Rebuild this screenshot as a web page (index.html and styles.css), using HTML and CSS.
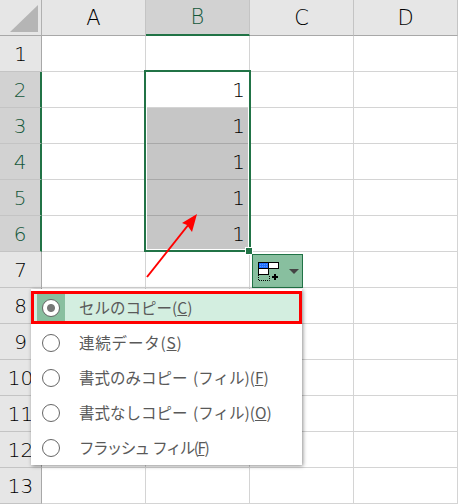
FILE: index.html
```html
<!DOCTYPE html>
<html lang="ja">
<head>
    <meta charset="UTF-8">
    <title>セルのコピー</title>
    <link rel="stylesheet" href="styles.css">
</head>
<body>
    <div class="sheet">
        <!-- Column headers -->
        <div class="grid">
            <div class="corner"><div class="corner-mark"></div></div>
            <div class="col-head">A</div>
            <div class="col-head col-on">B</div>
            <div class="col-head">C</div>
            <div class="col-head">D</div>

            <div class="row-head">1</div><div class="cell"></div><div class="cell"></div><div class="cell"></div><div class="cell"></div>
            <div class="row-head row-on">2</div><div class="cell"></div><div class="cell num">1</div><div class="cell"></div><div class="cell"></div>
            <div class="row-head row-on">3</div><div class="cell"></div><div class="cell num shade">1</div><div class="cell"></div><div class="cell"></div>
            <div class="row-head row-on">4</div><div class="cell"></div><div class="cell num shade">1</div><div class="cell"></div><div class="cell"></div>
            <div class="row-head row-on">5</div><div class="cell"></div><div class="cell num shade">1</div><div class="cell"></div><div class="cell"></div>
            <div class="row-head row-on">6</div><div class="cell"></div><div class="cell num shade">1</div><div class="cell"></div><div class="cell"></div>
            <div class="row-head">7</div><div class="cell"></div><div class="cell"></div><div class="cell"></div><div class="cell"></div>
            <div class="row-head">8</div><div class="cell"></div><div class="cell"></div><div class="cell"></div><div class="cell"></div>
            <div class="row-head">9</div><div class="cell"></div><div class="cell"></div><div class="cell"></div><div class="cell"></div>
            <div class="row-head">10</div><div class="cell"></div><div class="cell"></div><div class="cell"></div><div class="cell"></div>
            <div class="row-head">11</div><div class="cell"></div><div class="cell"></div><div class="cell"></div><div class="cell"></div>
            <div class="row-head">12</div><div class="cell"></div><div class="cell"></div><div class="cell"></div><div class="cell"></div>
            <div class="row-head">13</div><div class="cell"></div><div class="cell"></div><div class="cell"></div><div class="cell"></div>
        </div>

        <!-- Selection box and fill handle -->
        <div class="selection"></div>
        <div class="handle"></div>

        <!-- Autofill options button -->
        <div class="fill-btn">
            <svg width="22" height="19" viewBox="0 0 22 19">
                <defs>
                    <pattern id="dots" width="2" height="2" patternUnits="userSpaceOnUse">
                        <rect width="2" height="2" fill="#1f6fff"/>
                        <rect width="1" height="1" fill="#5a9bff"/>
                    </pattern>
                </defs>
                <rect x="0.5" y="0.5" width="10" height="6" fill="url(#dots)" stroke="#000"/>
                <rect x="10.5" y="0.5" width="10" height="6" fill="#fff" stroke="#000"/>
                <rect x="0.5" y="6.5" width="10" height="6" fill="#fff" stroke="#000"/>
                <path d="M0.5 13v5.5h11V13" fill="none" stroke="#000" stroke-dasharray="1 1"/>
                <path d="M16 12h2v2h2v2h-2v2h-2v-2h-2v-2h2z" fill="#000"/>
            </svg>
            <div class="caret"></div>
        </div>

        <!-- Arrow annotation -->
        <svg class="arrow" width="70" height="70" viewBox="0 0 70 70">
            <path d="M2 63L44 10" stroke="#f00" stroke-width="2" fill="none"/>
            <path d="M52 0L37 9L42 11L47 18z" fill="#f00"/>
        </svg>

        <!-- Fill options menu -->
        <div class="menu">
            <div class="item item-on">
                <span class="icon-box"><span class="radio radio-on"></span></span>
                <span class="label">セルのコピー(<u>C</u>)</span>
            </div>
            <div class="item">
                <span class="icon-box"><span class="radio"></span></span>
                <span class="label label-wide">連続データ(<u>S</u>)</span>
            </div>
            <div class="item">
                <span class="icon-box"><span class="radio"></span></span>
                <span class="label">書式のみコピー (フィル)(<u>F</u>)</span>
            </div>
            <div class="item">
                <span class="icon-box"><span class="radio"></span></span>
                <span class="label">書式なしコピー (フィル)(<u>O</u>)</span>
            </div>
            <div class="item">
                <span class="icon-box"><span class="radio"></span></span>
                <span class="label label-tight">フラッシュ フィル(<u>F</u>)</span>
            </div>
        </div>
    </div>
</body>
</html>
```

FILE: styles.css
```css
body {
    margin: 0;
    background: #fff;
    font-family: "Noto Sans CJK JP", "Noto Sans", sans-serif;
    overflow: hidden;
}

.sheet {
    position: relative;
    width: 458px;
    height: 504px;
    overflow: hidden;
}

.grid {
    display: grid;
    grid-template-columns: 42px repeat(4, 104px);
    grid-template-rows: 36px repeat(13, 36px);
}

/* Headers */
.corner {
    background: #e6e6e6;
    border-right: 1px solid #b0b0b0;
    border-bottom: 1px solid #a8a8a8;
    box-sizing: border-box;
    position: relative;
}
.corner-mark {
    position: absolute;
    left: 10px;
    top: 5px;
    width: 28px;
    height: 27px;
    background: #b5b5b5;
    clip-path: polygon(100% 0, 100% 100%, 0 100%);
}

.col-head {
    background: #e6e6e6;
    border-right: 1px solid #c4c4c4;
    border-bottom: 1px solid #a8a8a8;
    box-sizing: border-box;
    display: flex;
    align-items: center;
    justify-content: center;
    font-family: "DejaVu Sans", sans-serif;
    font-size: 21px;
    font-weight: 200;
    color: #000;
}
.col-on {
    background: #d2d2d2;
    border-bottom: 2px solid #217346;
    color: #14583a;
}

.row-head {
    background: #e6e6e6;
    border-right: 1px solid #a8a8a8;
    border-bottom: 1px solid #c4c4c4;
    box-sizing: border-box;
    display: flex;
    align-items: center;
    justify-content: center;
    font-family: "DejaVu Sans", sans-serif;
    font-size: 20px;
    font-weight: 200;
    color: #000;
}
.row-on {
    background: #d2d2d2;
    border-right: 2px solid #217346;
    color: #14583a;
}

/* Cells */
.cell {
    border-right: 1px solid #d4d4d4;
    border-bottom: 1px solid #d4d4d4;
    box-sizing: border-box;
}
.num {
    display: flex;
    align-items: center;
    justify-content: flex-end;
    padding-right: 4px;
    font-family: "DejaVu Sans", sans-serif;
    font-size: 20px;
    font-weight: 200;
    color: #000;
}
.shade {
    background: #c6c6c6;
    border-bottom-color: #a8a8a8;
}

/* Selection */
.selection {
    position: absolute;
    left: 144px;
    top: 70px;
    width: 103px;
    height: 178px;
    border: 2px solid #217346;
    box-shadow: inset 0 0 0 1px #fff;
}
.handle {
    position: absolute;
    left: 245px;
    top: 247px;
    width: 6px;
    height: 6px;
    background: #217346;
    border: 1px solid #fff;
}

.fill-btn {
    position: absolute;
    left: 252px;
    top: 254px;
    width: 51px;
    height: 34px;
    box-sizing: border-box;
    background: #88bf9f;
    border: 1px solid #217346;
    display: flex;
    align-items: center;
    padding-left: 5px;
}
.caret {
    margin-left: 9px;
    border-left: 5px solid transparent;
    border-right: 5px solid transparent;
    border-top: 5px solid #444;
}

.arrow {
    position: absolute;
    left: 145px;
    top: 214px;
}

/* Menu */
.menu {
    position: absolute;
    left: 31px;
    top: 289px;
    width: 271px;
    height: 176px;
    box-sizing: border-box;
    padding-top: 2px;
    background: #fff;
    box-shadow: 1px 1px 4px rgba(0, 0, 0, 0.45);
}
.item {
    display: flex;
    align-items: center;
    height: 35px;
    padding-left: 6px;
    font-size: 15.5px;
    word-spacing: 2px;
    color: #595959;
}
.item-on {
    height: 33px;
    margin-bottom: 1px;
    box-sizing: border-box;
    padding-left: 3px;
    background: #d3eee0;
    border: 3px solid #f00;
}
.icon-box {
    width: 28px;
    height: 100%;
    display: flex;
    align-items: center;
    justify-content: center;
}
.item-on .icon-box {
    background: #88bf9f;
}
.radio {
    display: block;
    width: 18px;
    height: 18px;
    box-sizing: border-box;
    border: 1px solid #666;
    border-radius: 50%;
    background: #fff;
}
.radio-on {
    background: radial-gradient(circle, #777 0, #777 3.5px, #fff 4.5px);
}
.label {
    margin-left: 14px;
    padding-bottom: 2px;
    white-space: nowrap;
}
.label-wide {
    letter-spacing: 0.8px;
}
.label-tight {
    letter-spacing: -1.6px;
}
```
